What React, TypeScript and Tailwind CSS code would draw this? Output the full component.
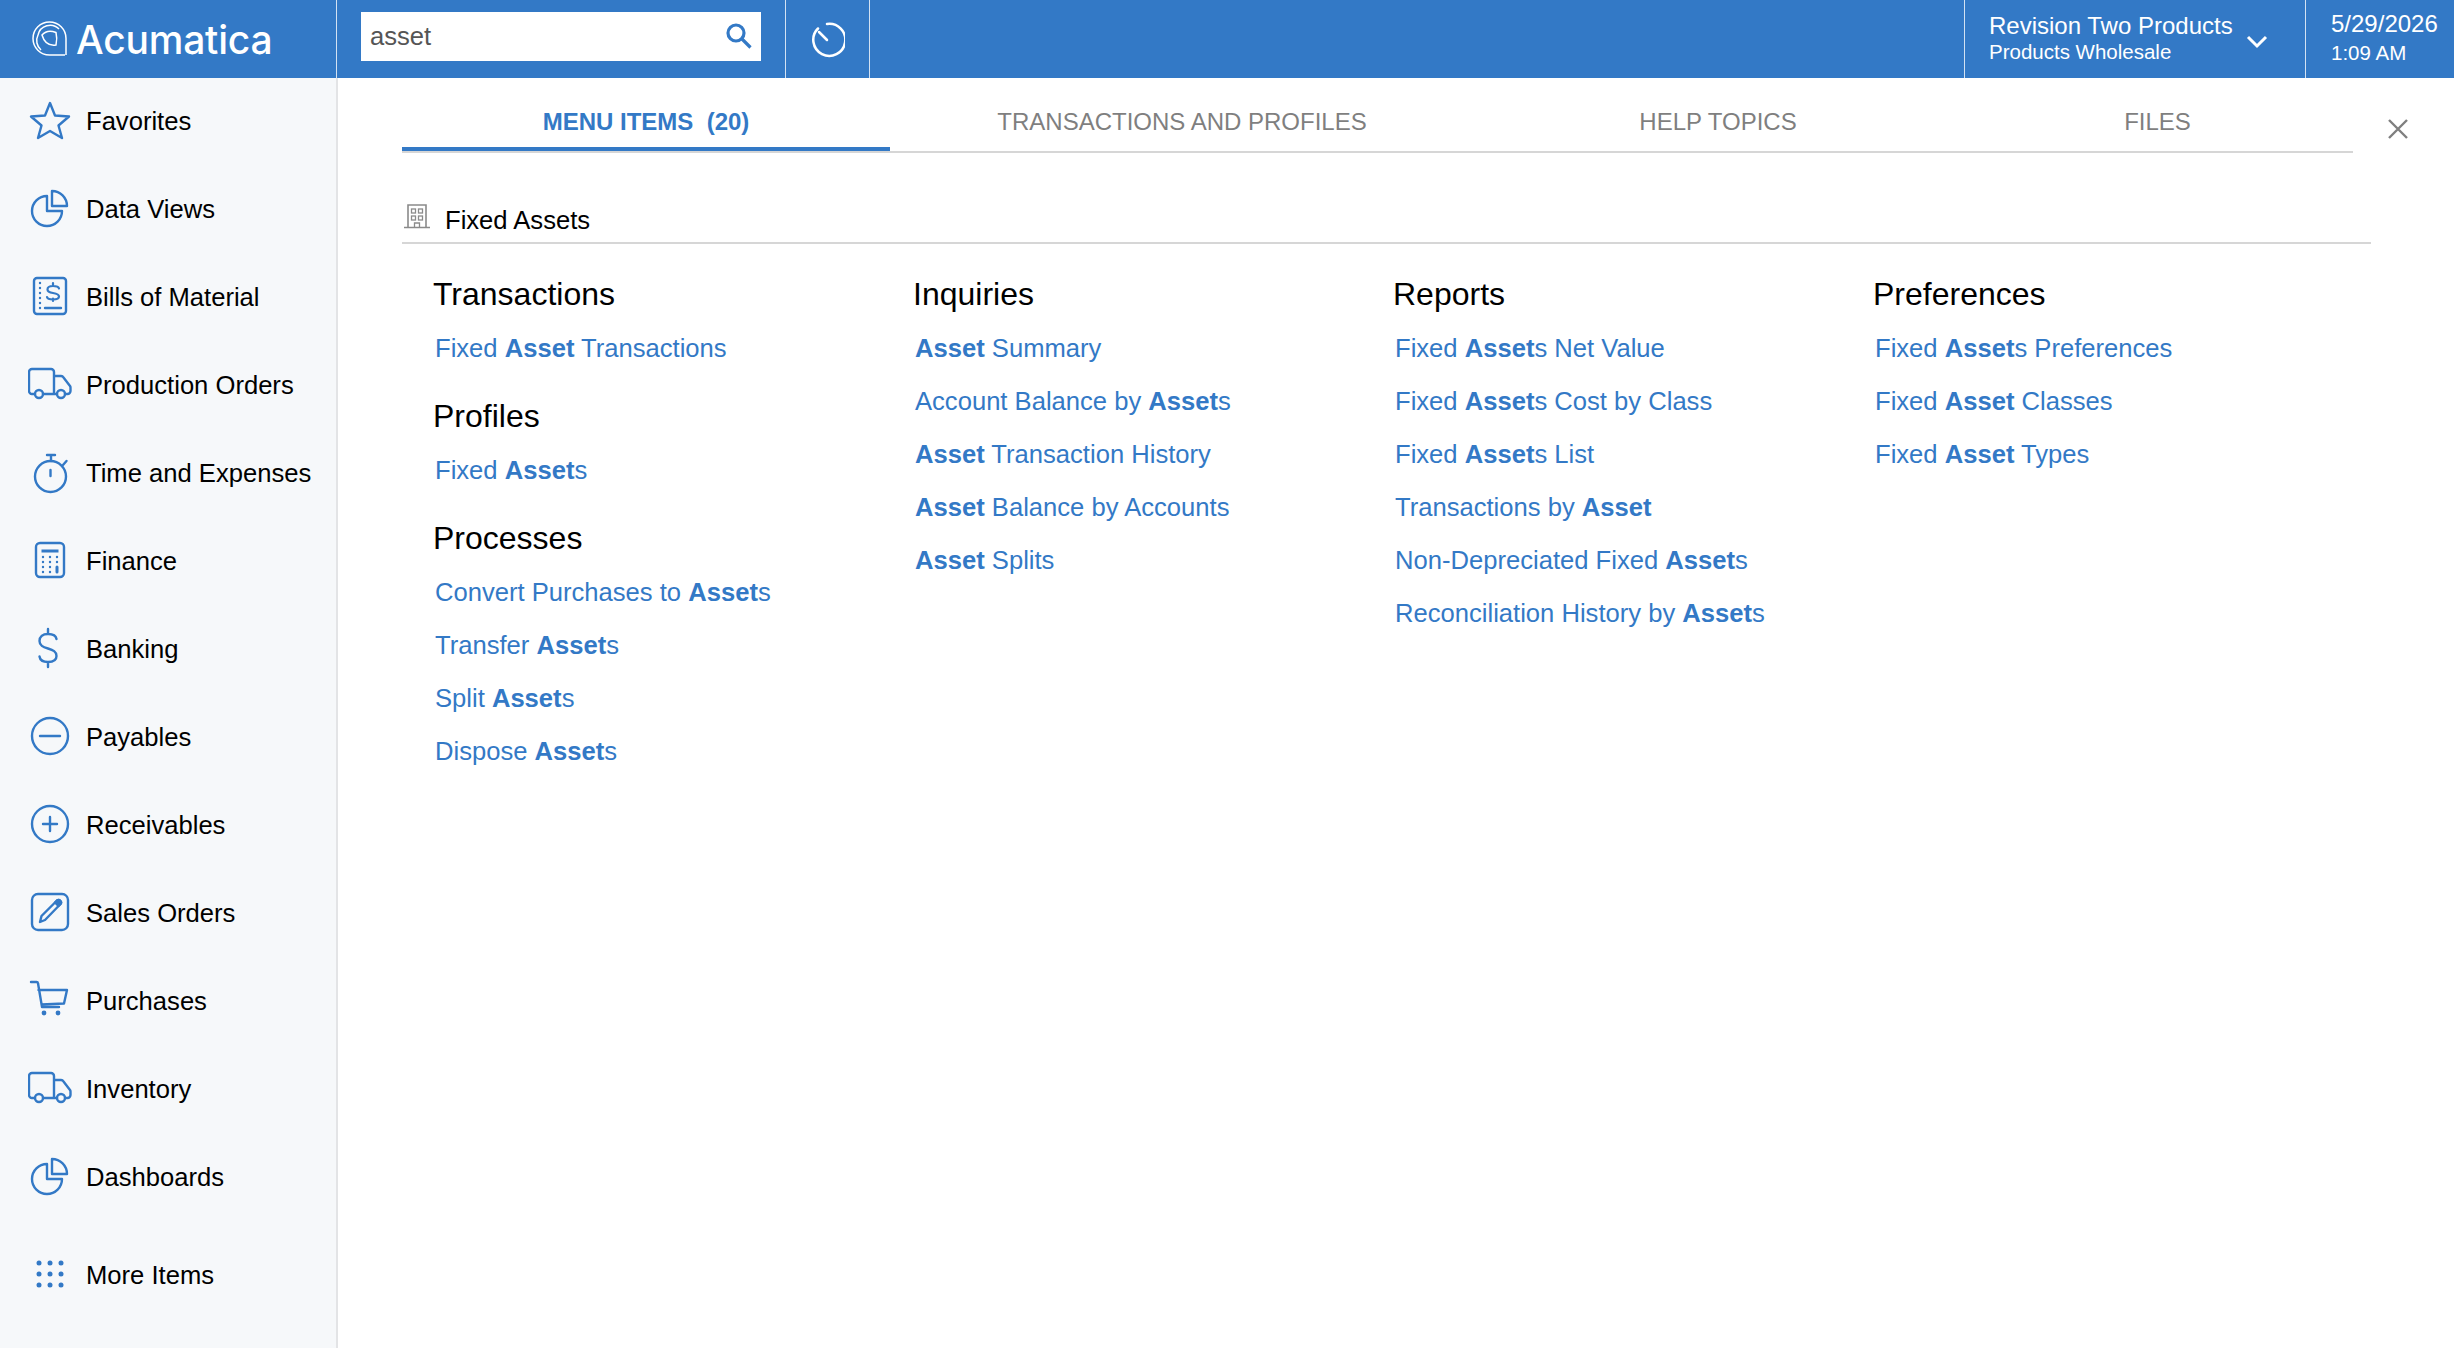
import type { ReactNode } from 'react'

const BLUE = '#3379c6'

function Icon({ children }: { children: ReactNode }) {
  return (
    <svg
      width="44"
      height="44"
      viewBox="0 0 44 44"
      fill="none"
      stroke={BLUE}
      strokeWidth="2.4"
      strokeLinecap="round"
      strokeLinejoin="round"
      className="ml-[28px] shrink-0"
    >
      {children}
    </svg>
  )
}

const PieIcon = () => (
  <Icon>
    <path d="M19 10A15 15 0 1 0 34 25H19Z" />
    <path d="M24 5A15 15 0 0 1 39 20H24Z" />
  </Icon>
)

const TruckIcon = () => (
  <Icon>
    <path d="M7 32H4a3 3 0 0 1-3-3V10a3 3 0 0 1 3-3h19a3 3 0 0 1 3 3v22M15 32h14M26 14h7a3 3 0 0 1 2.500 1.500l6.500 8.500a3 3 0 0 1 .5 2v3a3 3 0 0 1-3 3H37" />
    <circle cx="11" cy="32" r="4" />
    <circle cx="33" cy="32" r="4" />
  </Icon>
)

const navItems: { label: string; icon: ReactNode }[] = [
  {
    label: 'Favorites',
    icon: (
      <Icon>
        <path d="M22 5l5 12.500 14 1-10.500 9L34 40l-12-7-12 7 3.500-12.500L3 18.500l14-1z" />
      </Icon>
    ),
  },
  { label: 'Data Views', icon: <PieIcon /> },
  {
    label: 'Bills of Material',
    icon: (
      <Icon>
        <rect x="6" y="4" width="32" height="36" rx="3" />
        <path d="M12 9v.1M12 14v.1M12 19v.1M12 24v.1M12 29v.1M12 34v.1" />
        <path d="M17 34h16" />
        <path d="M25 9v3M25 27v-2.500M31 14.500c-.5-2-3-2.500-6-2.500-3.500 0-5.500 1.500-5.500 3.500s2 3 5.500 3.500 6 1.500 6 3.500-2.500 3-6 3c-3 0-5.500-.5-6-2.500" strokeWidth="2.200" />
      </Icon>
    ),
  },
  { label: 'Production Orders', icon: <TruckIcon /> },
  {
    label: 'Time and Expenses',
    icon: (
      <Icon>
        <circle cx="22.500" cy="26.500" r="15.500" />
        <path d="M19 5h8M23 5v6M35 15l3.500-4M22.500 20v6" />
      </Icon>
    ),
  },
  {
    label: 'Finance',
    icon: (
      <Icon>
        <rect x="8" y="5" width="28" height="34" rx="4" />
        <path d="M13.500 13h17" strokeWidth="3" strokeLinecap="butt" />
        <path d="M15 19v.1M22 19v.1M29 19v.1M15 24v.1M22 24v.1M29 24v.1M15 29v.1M22 29v.1M15 34v.1M22 34v.1" />
        <path d="M29 29v5" strokeWidth="3" />
      </Icon>
    ),
  },
  {
    label: 'Banking',
    icon: (
      <Icon>
        <path d="M20 3v5M20 36v5M28.500 13c-.5-3.500-3.500-5-8.500-5-5.500 0-8.500 3-8.500 7 0 4.500 3.500 6 8.500 7.500s8.500 3 8.500 7.500c0 4-3.500 6-8.500 6s-8-2-8.500-5.500" />
      </Icon>
    ),
  },
  {
    label: 'Payables',
    icon: (
      <Icon>
        <circle cx="22" cy="22" r="18" />
        <path d="M12 22h20" />
      </Icon>
    ),
  },
  {
    label: 'Receivables',
    icon: (
      <Icon>
        <circle cx="22" cy="22" r="18" />
        <path d="M15 22h14M22 15v14" />
      </Icon>
    ),
  },
  {
    label: 'Sales Orders',
    icon: (
      <Icon>
        <rect x="4" y="4" width="36" height="36" rx="6" />
        <path d="M12 32l1.500-6L29 10.500a2.500 2.500 0 0 1 3.500 3.500L17 30z" />
        <path d="M27 12.500l2-2a2.500 2.500 0 0 1 3.500 3.500l-2 2z" fill={BLUE} />
      </Icon>
    ),
  },
  {
    label: 'Purchases',
    icon: (
      <Icon>
        <path d="M3 4h5.500a1.500 1.500 0 0 1 1.500 1.300L14 29h17M10.500 12H39l-3 13.500-22.500 1" />
        <circle cx="16" cy="35" r="2.400" fill={BLUE} stroke="none" />
        <circle cx="30" cy="35" r="2.400" fill={BLUE} stroke="none" />
      </Icon>
    ),
  },
  { label: 'Inventory', icon: <TruckIcon /> },
  { label: 'Dashboards', icon: <PieIcon /> },
]

type Group = { title: string; links: string[] }

// "*" marks the matched part of a link
const columns: Group[][] = [
  [
    { title: 'Transactions', links: ['Fixed *Asset* Transactions'] },
    { title: 'Profiles', links: ['Fixed *Asset*s'] },
    {
      title: 'Processes',
      links: ['Convert Purchases to *Asset*s', 'Transfer *Asset*s', 'Split *Asset*s', 'Dispose *Asset*s'],
    },
  ],
  [
    {
      title: 'Inquiries',
      links: [
        '*Asset* Summary',
        'Account Balance by *Asset*s',
        '*Asset* Transaction History',
        '*Asset* Balance by Accounts',
        '*Asset* Splits',
      ],
    },
  ],
  [
    {
      title: 'Reports',
      links: [
        'Fixed *Asset*s Net Value',
        'Fixed *Asset*s Cost by Class',
        'Fixed *Asset*s List',
        'Transactions by *Asset*',
        'Non-Depreciated Fixed *Asset*s',
        'Reconciliation History by *Asset*s',
      ],
    },
  ],
  [
    {
      title: 'Preferences',
      links: ['Fixed *Asset*s Preferences', 'Fixed *Asset* Classes', 'Fixed *Asset* Types'],
    },
  ],
]

function Highlighted({ text }: { text: string }) {
  return (
    <>
      {text.split('*').map((part, i) =>
        i % 2 === 1 ? (
          <b key={i} className="font-bold">
            {part}
          </b>
        ) : (
          <span key={i}>{part}</span>
        ),
      )}
    </>
  )
}

function Logo() {
  return (
    <svg width="36" height="36" viewBox="0 0 36 36" fill="none" stroke="white" strokeWidth="1.500" className="shrink-0">
      <path d="M33 34H17.500A16.500 16.500 0 1 1 34 17.500V34" />
      <path d="M9 29A12.500 12.500 0 0 1 6 14 12.500 12.500 0 0 1 27 8" />
      <path d="M10 14c3.500-4 9-4.500 14-2.500 1 4 1 8 0 12.500-7 1-12-3-14-10z" />
    </svg>
  )
}

export default function App() {
  return (
    <div className="h-screen w-full flex flex-col overflow-hidden bg-white font-['Liberation_Sans',Arial,sans-serif] text-black">
      {/* Header */}
      <header className="h-[78px] shrink-0 flex bg-[#3379c6] text-white">
        <div className="w-[337px] flex items-center pl-[32px] border-r border-[#d3e2f3]">
          <Logo />
          <span className="ml-[8px] text-[39px] leading-none font-['Inter',sans-serif] font-medium tracking-[-0.2px]">
            Acumatica
          </span>
        </div>
        <div className="w-[449px] flex items-center pl-[24px] pb-[6px] border-r border-[#d3e2f3]">
          <div className="w-[400px] h-[49px] bg-white flex items-center justify-between pl-[9px] pr-[8px]">
            <span className="text-[25.600px] text-[#555555]">asset</span>
            <svg width="28" height="28" viewBox="0 0 28 28" fill="none" stroke={BLUE} strokeWidth="3.200">
              <circle cx="11" cy="11" r="8" />
              <path d="M17 17l8.500 8.500" />
            </svg>
          </div>
        </div>
        <div className="w-[84px] flex items-center justify-center border-r border-[#d3e2f3]">
          <svg width="36" height="36" viewBox="0 0 36 36" fill="none" stroke="white" strokeWidth="2.500" strokeLinecap="round" className="mt-[2px] mr-[2px]">
            <path d="M9 6.500A16 16 0 1 0 18 2v0" />
            <path d="M10 10l8 8" />
          </svg>
        </div>
        <div className="flex-1" />
        <div className="w-[342px] flex items-center justify-between pl-[24px] pr-[37px] border-l border-r border-[#d3e2f3]">
          <div className="flex flex-col mb-[3px]">
            <span className="text-[24px] leading-[28px]">Revision Two Products</span>
            <span className="text-[20.500px] leading-[24px]">Products Wholesale</span>
          </div>
          <svg width="22" height="14" viewBox="0 0 22 14" fill="none" stroke="white" strokeWidth="3" className="mt-[6px]">
            <path d="M2 2l9 9 9-9" />
          </svg>
        </div>
        <div className="flex-1 max-w-[148px] flex flex-col justify-center pl-[25px] pb-[3px]">
          <span className="text-[24px] leading-[30px]">5/29/2026</span>
          <span className="text-[20.500px] leading-[28px]">1:09 AM</span>
        </div>
      </header>

      <div className="flex flex-1 min-h-0">
        {/* Sidebar */}
        <nav className="w-[338px] shrink-0 bg-[#f6f8fa] border-r-2 border-[#e3e4e6] flex flex-col">
          <div className="-mt-[2px] flex flex-col">
            {navItems.map((item) => (
              <div key={item.label} className="h-[88px] flex items-center">
                <div className="w-[86px] shrink-0">{item.icon}</div>
                <span className="text-[25.600px] text-black mt-[2px]">{item.label}</span>
              </div>
            ))}
            <div className="mt-[10px] h-[88px] flex items-center">
              <div className="w-[86px] shrink-0">
                <Icon>
                  {[11, 22, 33].map((y) =>
                    [11, 22, 33].map((x) => (
                      <circle key={`${x}-${y}`} cx={x} cy={y} r="2.500" fill={BLUE} stroke="none" />
                    )),
                  )}
                </Icon>
              </div>
              <span className="text-[25.600px] text-black mt-[2px]">More Items</span>
            </div>
          </div>
        </nav>

        {/* Search results */}
        <main className="flex-1 pl-[64px]">
          <div className="flex items-start">
            <div className="w-[1951px] flex border-b-2 border-[#d6d6d6] text-[24px] text-[#7f7f7f]">
              <div className="w-[488px] h-[73px] pt-[19px] flex items-center justify-center border-b-[4px] border-[#3379c6] text-[#3379c6] font-bold whitespace-pre">
                MENU ITEMS  (20)
              </div>
              <div className="w-[584px] h-[73px] pt-[19px] flex items-center justify-center border-b-[4px] border-transparent">
                TRANSACTIONS AND PROFILES
              </div>
              <div className="w-[488px] h-[73px] pt-[19px] flex items-center justify-center border-b-[4px] border-transparent">HELP TOPICS</div>
              <div className="w-[391px] h-[73px] pt-[19px] flex items-center justify-center border-b-[4px] border-transparent">FILES</div>
            </div>
            <svg width="22" height="22" viewBox="0 0 22 22" fill="none" stroke="#7f7f7f" strokeWidth="2.400" className="ml-[34px] mt-[40px]">
              <path d="M2 2l18 18M20 2L2 20" />
            </svg>
          </div>

          <div className="w-[1969px] mt-[46px] h-[45px] flex items-center border-b-2 border-[#d6d6d6]">
            <svg width="28" height="26" viewBox="0 0 28 26" fill="none" stroke="#8a8a8a" strokeWidth="1.300" className="mb-[10px] ml-[1px]">
              <path d="M5 24V2h18v22M1 24.500h26" strokeWidth="1.600" />
              <rect x="8.500" y="6" width="4" height="4" />
              <rect x="15.500" y="6" width="4" height="4" />
              <rect x="8.500" y="13" width="4" height="4" />
              <rect x="15.500" y="13" width="4" height="4" />
              <path d="M11.500 24v-4h5v4" />
            </svg>
            <span className="ml-[14px] text-[25.600px] text-black">Fixed Assets</span>
          </div>

          <div className="grid grid-cols-[480px_480px_480px_480px] pl-[31px] pt-[30px]">
            {columns.map((groups, c) => (
              <div key={c} className="flex flex-col gap-[21px]">
                {groups.map((group) => (
                  <div key={group.title}>
                    <h2 className="text-[32px] leading-[40px] font-normal text-black">{group.title}</h2>
                    <ul className="mt-[8px]">
                      {group.links.map((link) => (
                        <li key={link} className="h-[53px] flex items-center pl-[2px] text-[25.600px] text-[#3379c6] whitespace-pre">
                          <Highlighted text={link} />
                        </li>
                      ))}
                    </ul>
                  </div>
                ))}
              </div>
            ))}
          </div>
        </main>
      </div>
    </div>
  )
}
